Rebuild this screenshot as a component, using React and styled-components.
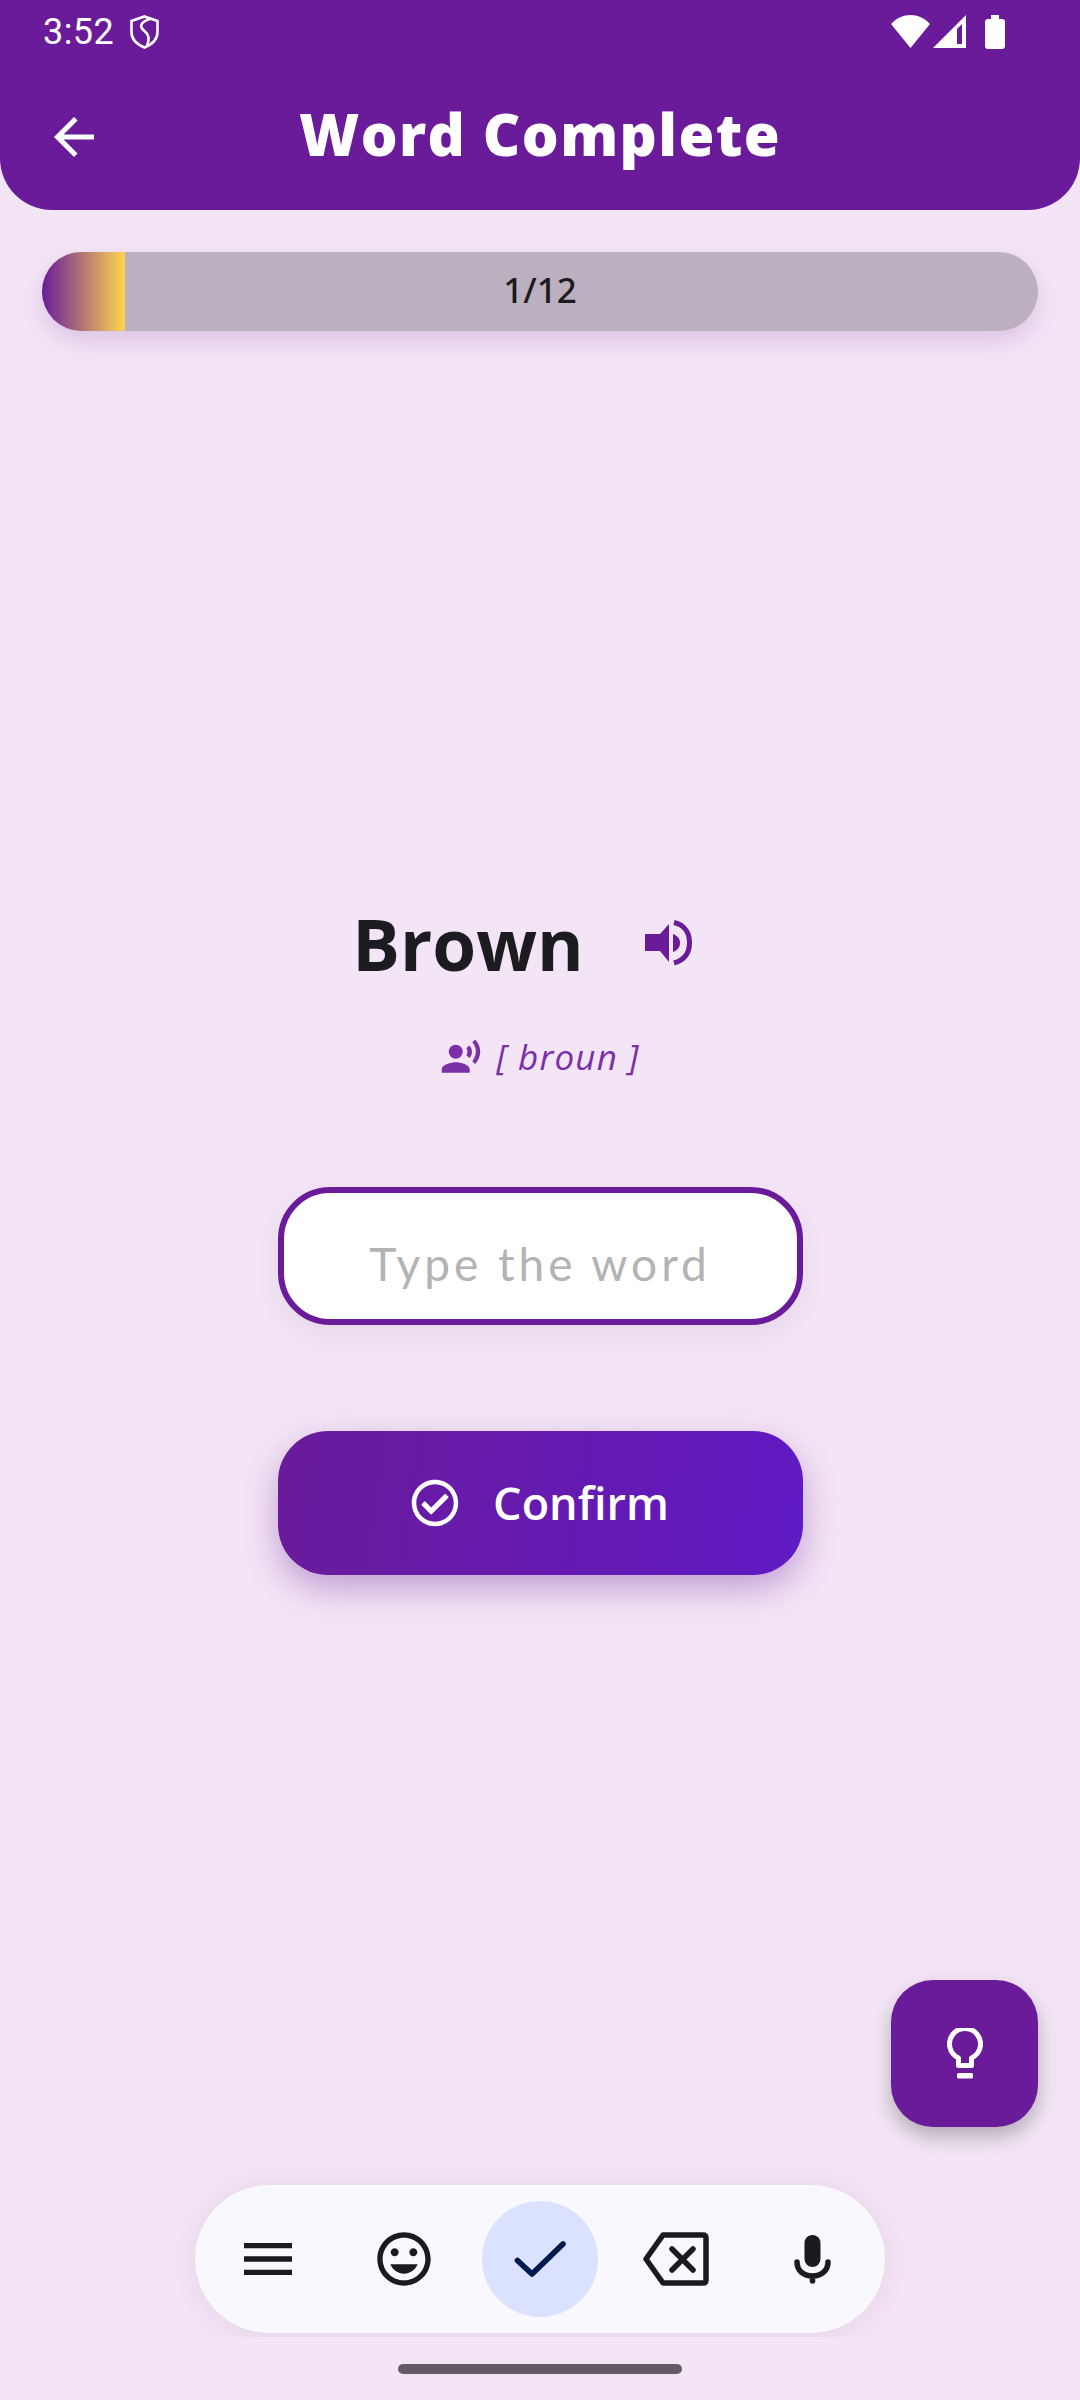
import React from 'react'
import styled, { createGlobalStyle } from 'styled-components'
import { MdArrowBack, MdMenu, MdInsertEmoticon, MdRecordVoiceOver } from 'react-icons/md'
import { FaRegCheckCircle } from 'react-icons/fa'

const GlobalStyle = createGlobalStyle`
  html, body { margin: 0; padding: 0; background: #f3e5f5; }
  body { font-family: "Lato", "Noto Sans", sans-serif; }
`

const ShieldIcon = () => (
  <svg width="29" height="34" viewBox="0 0 29 34" fill="none" stroke="#fff" strokeWidth="2.6">
    <path d="M14.5 1.5 L27.5 6 V17 C27.5 24 22 29.5 14.5 32.5 C7 29.5 1.5 24 1.5 17 V6 Z" />
    <path d="M20 4 C10 7 9 12 14.5 16 C19 19.5 20 24 17 31" />
  </svg>
)

const WifiIcon = () => (
  <svg width="39" height="33" viewBox="0 0 39 33" fill="#fff">
    <path d="M0 9 C11 -3 28 -3 39 9 L19.5 33 Z" />
  </svg>
)

const SignalIcon = () => (
  <svg width="33" height="33" viewBox="0 0 33 33">
    <path fillRule="evenodd" fill="#fff" d="M33 0 V33 H0 Z M24 14 V29 H29 V9 Z" />
  </svg>
)

const BatteryIcon = () => (
  <svg width="20" height="34" viewBox="0 0 20 34" fill="#fff">
    <path d="M6 0 H14 V4 H17 C19 4 20 5 20 7 V31 C20 33 19 34 17 34 H3 C1 34 0 33 0 31 V7 C0 5 1 4 3 4 H6 Z" />
  </svg>
)

const SpeakerIcon = () => (
  <svg width="47" height="46" viewBox="0 0 47 46" fill="#6a1b9a">
    <path d="M0 14 H15 L24 4 V42 L15 31 H0 Z" />
    <path d="M28 14 C33 16 35 19 35 23 C35 27 33 30 28 32 Z" />
    <path d="M29 2.5 C40 5 44.5 13 44.5 22.5 C44.5 32 40 40 29 43" fill="none" stroke="#6a1b9a" strokeWidth="5" />
  </svg>
)

const BulbIcon = () => (
  <svg width="36" height="51" viewBox="0 0 36 51" fill="none" stroke="#fff" strokeWidth="5" strokeLinejoin="round">
    <path d="M11.5 30 A15.5 15.5 0 1 1 24.5 30 V37.5 H11.5 Z" />
    <rect x="10" y="45" width="16" height="5.5" rx="1.5" fill="#fff" stroke="none" />
  </svg>
)

const CheckIcon = () => (
  <svg width="64" height="64" viewBox="0 0 64 64" fill="none" stroke="#001a4d" strokeWidth="5.7" strokeLinecap="round" strokeLinejoin="round">
    <path d="M9.5 33.5 L24 47 L55 17" />
  </svg>
)

const BackspaceIcon = () => (
  <svg width="66" height="54" viewBox="0 0 66 54" fill="none" stroke="#1a1b20" strokeWidth="5.5" strokeLinecap="round" strokeLinejoin="round">
    <path d="M20 3 H60 Q63 3 63 6 V48 Q63 51 60 51 H20 L3 27 Z" />
    <path d="M29 17 L50 38 M50 17 L29 38" />
  </svg>
)

const MicIcon = () => (
  <svg width="37" height="49" viewBox="0 0 37 49" fill="none" stroke="#1a1b20" strokeWidth="5.5" strokeLinecap="round">
    <rect x="10.5" y="0" width="16" height="32" rx="8" fill="#1a1b20" stroke="none" />
    <path d="M3 27 C3 36 10 41 18.5 41 C27 41 34 36 34 27 M18.5 41 V46" />
  </svg>
)

export default function App() {
  return (
    <Screen>
      <GlobalStyle />
      <Header>
        <StatusBar>
          <StatusLeft>
            <Clock>3:52</Clock>
            <ShieldIcon />
          </StatusLeft>
          <StatusRight>
            <WifiIcon />
            <SignalIcon />
            <BatterySlot><BatteryIcon /></BatterySlot>
          </StatusRight>
        </StatusBar>
        <TitleRow>
          <BackButton><MdArrowBack size={60} /></BackButton>
          <Title>Word Complete</Title>
        </TitleRow>
      </Header>

      <ProgressBar>
        <ProgressFill />
        <ProgressLabel>1/12</ProgressLabel>
      </ProgressBar>

      <Main>
        <WordRow>
          <Word>Brown</Word>
          <SpeakerIcon />
        </WordRow>
        <Phonetic>
          <MdRecordVoiceOver size={42} />
          <PhoneticText>[ broun ]</PhoneticText>
        </Phonetic>
        <WordInput placeholder="Type the word" readOnly />
        <ConfirmButton>
          <FaRegCheckCircle size={48} />
          <ConfirmLabel>Confirm</ConfirmLabel>
        </ConfirmButton>
      </Main>

      <Fab><BulbIcon /></Fab>

      <ToolbarClip>
        <Toolbar>
          <ToolButton><MdMenu size={64} /></ToolButton>
          <ToolButton><MdInsertEmoticon size={64} /></ToolButton>
          <ToolButton $active><CheckIcon /></ToolButton>
          <ToolButton><BackspaceIcon /></ToolButton>
          <ToolButton><MicIcon /></ToolButton>
        </Toolbar>
      </ToolbarClip>
      <HomeBar />
    </Screen>
  )
}

const Screen = styled.div`
  width: 1080px;
  height: 2400px;
  background: #f3e5f5;
  display: flex;
  flex-direction: column;
  overflow: hidden;
`
const Header = styled.header`
  height: 210px;
  flex: none;
  background: #6a1b9a;
  border-radius: 0 0 52px 52px;
  color: #fff;
`
const StatusBar = styled.div`
  height: 63px;
  padding: 0 75px 0 43px;
  display: flex;
  align-items: center;
  justify-content: space-between;
`
const StatusLeft = styled.div`
  display: flex;
  align-items: center;
  gap: 16px;
`
const Clock = styled.span`
  font-family: "Roboto", sans-serif;
  font-size: 36px;
  letter-spacing: 0.4px;
`
const StatusRight = styled.div`
  display: flex;
  align-items: center;
  gap: 3px;
`
const BatterySlot = styled.div`
  margin-left: 16px;
  display: flex;
`
const TitleRow = styled.div`
  position: relative;
  height: 147px;
  display: flex;
  align-items: center;
  justify-content: center;
  padding-bottom: 6px;
  box-sizing: border-box;
`
const BackButton = styled.div`
  position: absolute;
  left: 44px;
  top: 44px;
  display: flex;
`
const Title = styled.h1`
  margin: 0;
  font-family: "Open Sans", sans-serif;
  font-size: 58px;
  font-weight: 800;
  line-height: 70px;
  letter-spacing: 1.4px;
`
const ProgressBar = styled.div`
  margin: 42px 42px 0;
  height: 79px;
  flex: none;
  position: relative;
  border-radius: 40px;
  background: #bcb0c0;
  box-shadow: 0 10px 22px rgba(106, 27, 154, 0.16);
  overflow: hidden;
  display: flex;
  align-items: center;
  justify-content: center;
`
const ProgressFill = styled.div`
  position: absolute;
  left: 0;
  top: 0;
  bottom: 0;
  width: 83px;
  background: linear-gradient(90deg, #6a1b9a, #ffd54f);
`
const ProgressLabel = styled.span`
  position: relative;
  top: -2px;
  font-family: "Noto Sans", sans-serif;
  font-size: 35px;
  font-weight: 500;
  color: #1c1b1f;
`
const Main = styled.main`
  display: flex;
  flex-direction: column;
  align-items: center;
  padding-top: 567px;
  flex: none;
  height: 1649px;
  box-sizing: border-box;
`
const WordRow = styled.div`
  display: flex;
  align-items: center;
  gap: 61px;
  height: 90px;
  margin-right: 36px;
`
const Word = styled.h2`
  margin: 0;
  font-family: "Open Sans", sans-serif;
  font-size: 71px;
  font-weight: 700;
  color: #1c1b1f;
`
const Phonetic = styled.div`
  margin-top: 45px;
  display: flex;
  align-items: center;
  gap: 14px;
  color: #7b2fa8;
`
const PhoneticText = styled.span`
  font-family: "Open Sans", sans-serif;
  font-size: 35px;
  font-style: italic;
  letter-spacing: 1.2px;
`
const WordInput = styled.input`
  margin-top: 107px;
  width: 525px;
  height: 138px;
  box-sizing: border-box;
  border: 6px solid #6a1b9a;
  border-radius: 52px;
  padding: 14px 0 0;
  background: #fff;
  text-align: center;
  font-family: inherit;
  font-size: 46px;
  letter-spacing: 4px;
  outline: none;
  box-shadow: 0 10px 30px rgba(0, 0, 0, 0.06);
  &::placeholder { color: #b3b3b3; opacity: 1; }
`
const ConfirmButton = styled.button`
  margin-top: 106px;
  width: 525px;
  height: 144px;
  border: none;
  border-radius: 50px;
  background: linear-gradient(100deg, #6a1b9a, #601ac4);
  color: #fff;
  display: flex;
  align-items: center;
  justify-content: center;
  gap: 34px;
  box-shadow: 0 14px 34px rgba(106, 27, 154, 0.35);
`
const ConfirmLabel = styled.span`
  font-family: "Open Sans", sans-serif;
  font-size: 45px;
  font-weight: 600;
  position: relative;
  top: -1px;
`
const Fab = styled.div`
  position: absolute;
  top: 1980px;
  left: 891px;
  width: 147px;
  height: 147px;
  border-radius: 42px;
  background: #6a1b9a;
  display: flex;
  align-items: center;
  justify-content: center;
  box-shadow: 0 10px 20px rgba(0, 0, 0, 0.25);
`
const ToolbarClip = styled.div`
  position: absolute;
  top: 2140px;
  left: 140px;
  width: 800px;
  height: 197px;
  overflow: hidden;
  display: flex;
  justify-content: center;
  align-items: flex-end;
`
const Toolbar = styled.nav`
  width: 690px;
  height: 148px;
  margin-bottom: 4px;
  box-sizing: border-box;
  padding: 0 15px;
  border-radius: 74px;
  background: #faf8ff;
  display: flex;
  align-items: center;
  gap: 20px;
  box-shadow: 0 2px 26px rgba(106, 27, 100, 0.1);
`
const ToolButton = styled.div`
  width: 116px;
  height: 116px;
  border-radius: 50%;
  display: flex;
  align-items: center;
  justify-content: center;
  color: #1a1b20;
  background: ${p => (p.$active ? '#dae2ff' : 'transparent')};
`
const HomeBar = styled.div`
  position: absolute;
  top: 2364px;
  left: 398px;
  width: 284px;
  height: 10px;
  border-radius: 5px;
  background: #625b63;
`
